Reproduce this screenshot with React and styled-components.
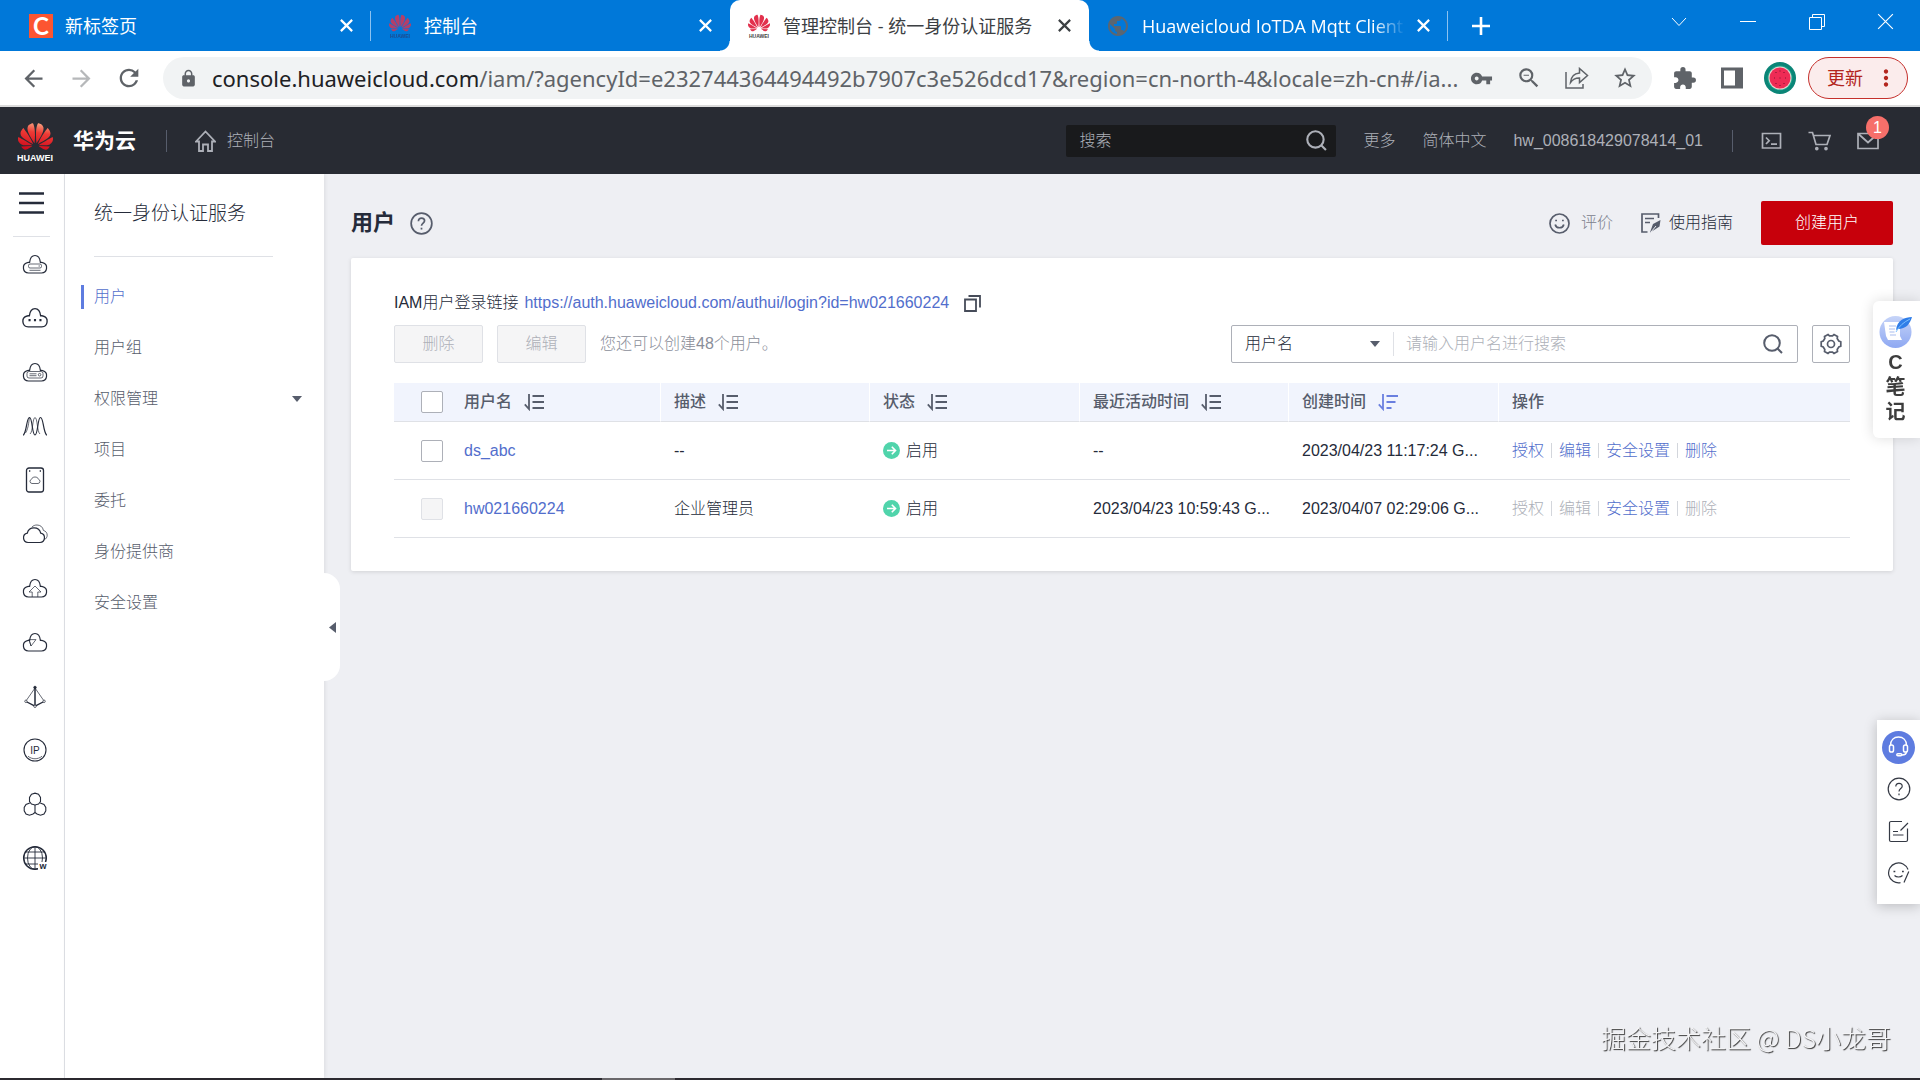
import styled, { createGlobalStyle, css } from "styled-components";
import {
  MdArrowBack,
  MdArrowForward,
  MdRefresh,
  MdLock,
  MdVpnKey,
  MdExtension,
  MdStarOutline,
  MdMoreVert,
  MdPublic,
  MdOutlineZoomOut,
} from "react-icons/md";
import { SiHuawei } from "react-icons/si";

const GlobalStyle = createGlobalStyle`
  * {
    box-sizing: border-box;
  }

  body {
    margin: 0;
    background: #eeeff3;
    color: #252b3a;
    font-family: "Liberation Sans", "Noto Sans CJK SC", sans-serif;
    font-size: 16px;
    font-weight: 300;
    line-height: 24px;
  }

  button,
  input,
  select {
    font: inherit;
    color: inherit;
    margin: 0;
    padding: 0;
    border: 0;
    background: none;
    outline: none;
  }

  a {
    color: inherit;
    text-decoration: none;
  }

  ul {
    list-style: none;
    margin: 0;
    padding: 0;
  }

  svg {
    display: block;
    flex: none;
  }
`;

const Page = styled.div`
  min-height: 100vh;
  display: flex;
  flex-direction: column;
`;

/* browser window */

const TabStrip = styled.div`
  height: 51px;
  display: flex;
  padding-left: 12px;
  background: #0078d9;
  color: #fff;
  font-family: "Open Sans", "Noto Sans CJK SC", sans-serif;
  font-size: 18px;
  font-weight: 400;
`;

const Tab = styled.div`
  position: relative;
  flex: 0 1 359px;
  min-width: 0;
  display: flex;
  align-items: center;
  gap: 12px;
  padding: 0 18px 0 17px;

  ${({ $divider }) =>
    $divider &&
    css`
      &::after {
        content: "";
        position: absolute;
        right: 0;
        top: 11px;
        width: 1px;
        height: 30px;
        background: #8cc2f0;
      }
    `}

  ${({ $active }) =>
    $active &&
    css`
      background: #fff;
      color: #3c4043;
      border-radius: 10px 10px 0 0;

      &::before,
      &::after {
        content: "";
        position: absolute;
        bottom: 0;
        width: 10px;
        height: 10px;
      }

      &::before {
        left: -10px;
        background: radial-gradient(circle at 0 0, transparent 9px, #fff 10px);
      }

      &::after {
        right: -10px;
        background: radial-gradient(circle at 100% 0, transparent 9px, #fff 10px);
      }
    `}
`;

const TabTitle = styled.span`
  flex: 1;
  min-width: 0;
  overflow: hidden;
  white-space: nowrap;
  ${({ $fade }) => $fade && "mask-image: linear-gradient(90deg, #000 88%, transparent);"}
`;

const CsdnMark = styled.span`
  flex: none;
  width: 24px;
  height: 24px;
  background: #fc5531;
  font-family: Lato, sans-serif;
  font-size: 24px;
  font-weight: 700;
  line-height: 24px;
  text-align: center;
`;

const FavMark = styled.span`
  flex: none;
  width: 24px;
  display: flex;
  flex-direction: column;
  align-items: center;
  color: #e2314d;
  opacity: ${({ $dim }) => ($dim ? 0.8 : 1)};
`;

const FavText = styled.span`
  color: ${({ $dim }) => ($dim ? "#233f7a" : "#444")};
  font-family: "Liberation Sans", sans-serif;
  font-size: 5px;
  font-weight: 700;
  line-height: 5px;
`;

const PlainButton = styled.button`
  flex: none;
  display: flex;
  align-items: center;
  justify-content: center;
`;

const NewTab = styled(PlainButton)`
  width: 66px;
`;

const WindowButtons = styled.div`
  display: flex;
  height: 43px;
  margin-left: auto;
`;

const WindowButton = styled(PlainButton)`
  width: 69px;
`;

const Toolbar = styled.div`
  height: 56px;
  display: flex;
  align-items: center;
  padding: 0 12px 0 9px;
  background: #fff;
  border-bottom: 2px solid #dcdcdc;
  color: #5f6368;
  font-family: "Open Sans", "Noto Sans CJK SC", sans-serif;
  font-weight: 400;
`;

const NavButton = styled(PlainButton)`
  width: 48px;
  height: 42px;
  opacity: ${({ disabled }) => (disabled ? 0.45 : 1)};
`;

const AddressBar = styled.div`
  flex: 1;
  min-width: 0;
  height: 42px;
  display: flex;
  align-items: center;
  margin: 0 8px 0 10px;
  padding: 0 3px 0 16px;
  border-radius: 21px;
  background: #f1f3f4;
`;

const UrlLabel = styled.label`
  flex: 1;
  min-width: 0;
  display: flex;
  margin: 0 -8px 0 14px;
  font-family: "Noto Sans", sans-serif;
  font-size: 22px;
  line-height: 30px;
`;

const UrlHost = styled.span`
  color: #202124;
`;

const UrlPath = styled.input`
  flex: 1;
  min-width: 0;
`;

const Avatar = styled.span`
  width: 32px;
  height: 32px;
  margin: 0 12px 0 8px;
`;

const UpdateButton = styled.button`
  flex: none;
  width: 100px;
  height: 42px;
  display: flex;
  align-items: center;
  justify-content: space-between;
  padding: 0 8px 0 18px;
  border: 1px solid #c5302c;
  border-radius: 21px;
  background: #fbecec;
  color: #b3261e;
  font-size: 18px;
`;

/* console header */

const ConsoleHeader = styled.header`
  height: 67px;
  display: flex;
  align-items: center;
  padding: 0 41px 0 16px;
  background: #282b33;
  color: #adb0b8;
`;

const Logo = styled.a`
  width: 38px;
  display: flex;
  flex-direction: column;
  align-items: center;
  color: #fff;
  font-size: 9px;
  font-weight: 700;
  line-height: 8px;
`;

const Petals = styled(SiHuawei)`
  path {
    fill: url(#petals);
  }
`;

const Brand = styled.a`
  margin-left: 19px;
  color: #fff;
  font-size: 21px;
  font-weight: 700;
`;

const HeaderRule = styled.span`
  width: 1px;
  height: 22px;
  margin: 0 28px 0 ${({ $left }) => $left}px;
  background: #575d6c;
`;

const HomeLink = styled.a`
  display: flex;
  align-items: center;
  gap: 11px;
`;

const HeaderSearch = styled.label`
  width: 270px;
  height: 32px;
  display: flex;
  align-items: center;
  margin-left: auto;
  padding: 0 9px 0 13px;
  border-radius: 2px;
  background: #191a1c;

  input {
    flex: 1;
    min-width: 0;
  }

  input::placeholder {
    color: #adb0b8;
    opacity: 1;
  }
`;

const HeaderLink = styled.a`
  margin-left: 27px;
`;

const HeaderIcons = styled.div`
  display: flex;
  gap: 26px;
`;

const MailButton = styled(PlainButton)`
  position: relative;
`;

const MailBadge = styled.span`
  position: absolute;
  left: 9px;
  top: -15px;
  width: 23px;
  height: 23px;
  border-radius: 50%;
  background: #f66f6a;
  color: #fff;
  line-height: 23px;
`;

/* body */

const Body = styled.div`
  flex: 1;
  display: flex;
`;

const Rail = styled.nav`
  flex: none;
  width: 65px;
  padding: 18px 14px 0 13px;
  border-right: 1px solid #dfe1e6;
  background: #fff;
  color: #252b3a;
`;

const MenuButton = styled(PlainButton)`
  width: 37px;
  padding-bottom: 22px;
  border-bottom: 1px solid #dfe1e6;
`;

const RailItem = styled.a`
  width: 44px;
  height: 54px;
  display: flex;
  align-items: center;
  justify-content: center;
`;

const SideNav = styled.aside`
  position: relative;
  flex: none;
  width: 259px;
  padding-left: 29px;
  background: #fff;
  box-shadow: 1px 0 4px rgba(0, 0, 0, 0.08);
`;

const SideTitle = styled.h2`
  margin: 0 51px 14px 0;
  padding: 28px 0 30px;
  border-bottom: 1px solid #dfe1e6;
  font-size: 19px;
  font-weight: 300;
`;

const SideItem = styled.li`
  height: 51px;
  display: flex;
  align-items: center;
  gap: 10px;
  padding-right: 22px;
  margin-left: -13px;
  color: ${({ $active }) => ($active ? "#526ecc" : "#575d6c")};

  &::before {
    content: "";
    width: 3px;
    height: 24px;
    background: ${({ $active }) => ($active ? "#5e7ce0" : "transparent")};
  }

  a {
    flex: 1;
  }
`;

const CollapseHandle = styled.button`
  position: absolute;
  left: 259px;
  top: 399px;
  width: 16px;
  height: 108px;
  display: flex;
  align-items: center;
  padding-left: 5px;
  border-radius: 0 16px 16px 0;
  background: #fff;
`;

const Main = styled.main`
  flex: 1;
  min-width: 0;
  padding: 0 27px;
`;

const TitleBar = styled.div`
  display: flex;
  align-items: center;
  padding: 27px 0 13px;
  color: #575d6c;
`;

const Title = styled.h1`
  margin: 0 15px 0 0;
  color: #252b3a;
  font-size: 22px;
  font-weight: 700;
`;

const TitleLink = styled.a`
  display: flex;
  align-items: center;
  gap: ${({ $gap }) => $gap}px;
  margin-left: ${({ $left }) => $left || "28px"};
  color: ${({ $dark }) => ($dark ? "#252b3a" : "#7b808c")};

  svg {
    color: #575d6c;
  }
`;

const CreateButton = styled.button`
  width: 132px;
  height: 44px;
  margin-left: 28px;
  border-radius: 2px;
  background: #c7000b;
  color: #fff;
`;

const Card = styled.section`
  padding: 33px 43px;
  border-radius: 2px;
  background: #fff;
  box-shadow: 0 1px 4px rgba(0, 0, 0, 0.12);
`;

const LoginLink = styled.div`
  display: flex;
  align-items: center;
  gap: 6px;

  button {
    margin-left: 9px;
    color: #464c59;
  }
`;

const TextLink = styled.a`
  color: ${({ $off }) => ($off ? "#adb0b8" : "#526ecc")};
`;

const ActionBar = styled.div`
  display: flex;
  align-items: center;
  gap: 14px;
  margin: 10px 0 20px;
`;

const GrayButton = styled.button`
  width: 89px;
  height: 38px;
  border: 1px solid #dfe1e6;
  border-radius: 2px;
  background: #f5f5f6;
  color: #adb0b8;
`;

const Quota = styled.span`
  color: #8a8e99;
`;

const FilterBox = styled.div`
  width: 567px;
  height: 38px;
  display: flex;
  align-items: center;
  margin-left: auto;
  padding-right: 14px;
  border: 1px solid #adb0b8;
  border-radius: 2px;
  color: #575d6c;
`;

const FieldLabel = styled.label`
  width: 162px;
  display: flex;
  align-items: center;
  padding: 0 13px;
  border-right: 1px solid #dfe1e6;

  select {
    flex: 1;
    appearance: none;
    color: #252b3a;
  }
`;

const FilterInput = styled.input`
  flex: 1;
  min-width: 0;
  padding-left: 12px;

  &::placeholder {
    color: #adb0b8;
    opacity: 1;
  }
`;

const GearButton = styled(PlainButton)`
  width: 38px;
  height: 38px;
  border: 1px solid #adb0b8;
  border-radius: 2px;
  color: #575d6c;
`;

const Table = styled.table`
  width: 100%;
  table-layout: fixed;
  border-collapse: separate;
  border-spacing: 0;

  th,
  td {
    padding: 0 14px;
    border-bottom: 1px solid #dfe1e6;
    text-align: left;
    overflow: hidden;
    white-space: nowrap;
  }

  th {
    height: 39px;
    background: #f1f4fd;
    color: #575d6c;
    font-weight: 500;
  }

  th + th + th {
    padding-left: 13px;
    border-left: 1px solid #fff;
  }

  td {
    height: 58px;
  }

  th:first-child,
  td:first-child {
    padding: 0 0 0 27px;
  }
`;

const Col = styled.col`
  width: ${({ $width }) => $width};
`;

const HeadCell = styled.div`
  display: flex;
  align-items: center;
  gap: 12px;
`;

const Checkbox = styled.input`
  display: block;
  appearance: none;
  width: 22px;
  height: 22px;
  border: 1px solid #adb0b8;
  border-radius: 2px;
  background: #fff;

  &:disabled {
    border-color: #dfe1e6;
    background: #f5f5f6;
  }
`;

const Status = styled.span`
  display: flex;
  align-items: center;
  gap: 6px;
`;

const RowActions = styled.div`
  display: flex;
  align-items: center;

  a + a {
    display: flex;
    align-items: center;
  }

  a + a::before {
    content: "";
    width: 1px;
    height: 15px;
    margin: 0 7px;
    background: #d3d6dc;
  }
`;

/* floating widgets */

const NotePanel = styled.button`
  position: fixed;
  right: 0;
  top: 301px;
  width: 47px;
  height: 137px;
  display: flex;
  flex-direction: column;
  align-items: center;
  padding: 14px 2px 0 0;
  border-radius: 6px 0 0 6px;
  background: #fff;
  box-shadow: 0 0 14px rgba(0, 0, 0, 0.14);
  color: #3d3d3d;
  font-size: 20px;
  font-weight: 700;
  line-height: 25px;

  svg {
    margin-bottom: 2px;
  }
`;

const ToolPanel = styled.div`
  position: fixed;
  right: 0;
  top: 720px;
  width: 43px;
  height: 184px;
  display: flex;
  flex-direction: column;
  align-items: center;
  padding-top: 6px;
  background: #fff;
  box-shadow: 0 2px 12px rgba(0, 0, 0, 0.22);
  color: #343944;

  button {
    height: 42px;
  }
`;

const Watermark = styled.span`
  position: fixed;
  right: 29px;
  bottom: 25px;
  color: #f4f4f6;
  font-family: "Noto Sans CJK SC", sans-serif;
  font-size: 25px;
  line-height: 36px;
  text-shadow: 1px 1px 1px #333;
`;

const TaskEdge = styled.footer`
  height: 2px;
  display: flex;
  padding-left: 602px;
  background: #2c2a30;
`;

const TaskEdgeActive = styled.span`
  width: 73px;
  background: #6a686b;
`;

/* icons */

const Stroke = ({ w = 24, h = 24, box, sw = 1.5, children }) => (
  <svg
    width={w}
    height={h}
    viewBox={box || `0 0 ${w} ${h}`}
    fill="none"
    stroke="currentColor"
    strokeWidth={sw}
    aria-hidden="true"
  >
    {children}
  </svg>
);

const Cross = ({ size = 12, sw = 2 }) => (
  <Stroke w={size} h={size} box="0 0 12 12" sw={sw}>
    <path d="M0.8 0.8l10.4 10.4M11.2 0.8L0.8 11.2" />
  </Stroke>
);

const Caret = () => (
  <svg width="10" height="6" viewBox="0 0 10 6" fill="#575d6c" aria-hidden="true">
    <path d="M0 0h10L5 6z" />
  </svg>
);

const Magnifier = ({ size = 20, sw = 2 }) => (
  <Stroke w={size} h={size} box="0 0 20 20" sw={sw}>
    <circle cx="9" cy="9" r="7.8" />
    <path d="M14.5 14.5l4.5 4.5" />
  </Stroke>
);

const SortIcon = ({ active }) => (
  <svg
    width="20"
    height="18"
    viewBox="0 0 20 18"
    fill="none"
    stroke={active ? "#6a7fdf" : "#575d6c"}
    strokeWidth="1.8"
    aria-hidden="true"
  >
    <path d="M5 1v15L0.8 11.4" />
    <path d={active ? "M8.5 3H20M8.5 9h9M8.5 15h5" : "M8.5 3H20M8.5 9H20M8.5 15H20"} />
  </svg>
);

const HelpCircle = ({ size = 24, sw = 1.8 }) => (
  <Stroke w={size} h={size} box="0 0 24 24" sw={sw}>
    <circle cx="12" cy="12" r="10.8" />
    <path d="M8.8 9.6c0-2 1.4-3.3 3.2-3.3s3.2 1.2 3.2 2.9c0 2.3-3.2 2.5-3.2 5.2" />
    <path d="M12 16.4v1.9" />
  </Stroke>
);

const cloudPath =
  "M6.5 19h13a5.3 5.3 0 0 0 1.2-10.4c-.9-.3-1.8-.3-2.3-.2C17.9 4 15.6 1.5 13 1.5S8.1 4 7.6 8.4c-.5-.1-1.4-.1-2.3.2A5.3 5.3 0 0 0 6.5 19z";

const Cloud = ({ children }) => (
  <Stroke w={26} h={21} sw={1.2}>
    <path d={cloudPath} />
    {children}
  </Stroke>
);

const railIcons = [
  {
    label: "弹性云服务器",
    icon: (
      <Cloud>
        <rect x="6.5" y="10" width="13" height="4" rx="1.5" strokeWidth="0.7" />
        <path d="M16.5 12H18M7.5 16.3h11" strokeWidth="0.7" />
      </Cloud>
    ),
  },
  {
    label: "云容器引擎",
    icon: (
      <Stroke w={28} h={22} box="0 0 26 21" sw={1.3}>
        <path d={cloudPath} />
        <path d="M6.8 12.5h2M12 12.5h2M17.2 12.5h2" strokeWidth="2" />
      </Stroke>
    ),
  },
  {
    label: "裸金属服务器",
    icon: (
      <Cloud>
        <rect x="5" y="9.5" width="16" height="6.5" rx="2" strokeWidth="0.7" />
        <path d="M7.5 11.8h7M7.5 13.7h7" strokeWidth="0.7" />
        <circle cx="17.6" cy="12.7" r="1.3" strokeWidth="0.7" />
      </Cloud>
    ),
  },
  {
    label: "弹性伸缩",
    icon: (
      <Stroke w={26} h={20} sw={1.2}>
        <path d="M1 19h.5C5 15 4.500 1.500 7.500 1.500S10 19 13 19 15.500 1.500 18.500 1.500 21 15 24.500 19h.5" />
        <path d="M3.500 17C7 12 7 1.500 7.500 1.500M8 18c3-2 2.500-16.500 5-16.500S15 16 18 18" strokeWidth="0.7" />
      </Stroke>
    ),
  },
  {
    label: "云硬盘",
    icon: (
      <Stroke w={20} h={26} sw={1.3}>
        <rect x="1.5" y="1" width="17" height="24" rx="2.5" />
        <path d="M4 4h1.3M14.7 4H16" />
        <path
          d="M7 16.5h6a2.2 2.2 0 0 0 .4-4.3C13 10.8 11.7 10 10 10s-3 .8-3.4 2.2A2.2 2.2 0 0 0 7 16.5z"
          strokeWidth="0.7"
        />
      </Stroke>
    ),
  },
  {
    label: "云备份",
    icon: (
      <Stroke w={26} h={20} sw={1.2}>
        <path d="M6 18.5h12a4.7 4.7 0 0 0 .7-9.3C18 5.7 15.5 3.8 12 3.8S6 5.7 5.3 9.2A4.7 4.7 0 0 0 6 18.5z" />
        <path
          d="M10 3c1.4-1.4 3-2 5-2 3.4 0 5.8 2 6.4 5.4 2.4.7 3.8 2.5 3.8 4.8 0 2-1.2 3.7-2.8 4.5"
          strokeWidth="0.7"
        />
      </Stroke>
    ),
  },
  {
    label: "对象存储服务",
    icon: (
      <Cloud>
        <path d="M10.2 19v-5H7l6-6 6 6h-3.2v5" strokeWidth="0.7" />
      </Cloud>
    ),
  },
  {
    label: "内容分发网络",
    icon: (
      <Cloud>
        <path d="M7 7.6h7L9 14zM7 7.6l2 6.4" strokeWidth="0.7" />
      </Cloud>
    ),
  },
  {
    label: "虚拟私有云",
    icon: (
      <Stroke w={22} h={23} sw={0.7}>
        <circle cx="11" cy="2.5" r="1.3" fill="currentColor" />
        <path d="M11 3L1.800 16.200M11 3l9.200 13.200" />
        <path d="M11 3v18" strokeWidth="1.5" />
        <path d="M2 16.500l9 4.700 9-4.700" strokeWidth="1.3" />
        <circle cx="1.9" cy="16.3" r="1.2" fill="#fff" />
        <circle cx="20.1" cy="16.3" r="1.2" fill="#fff" />
        <circle cx="11" cy="21.3" r="1.2" fill="#fff" />
      </Stroke>
    ),
  },
  {
    label: "弹性公网IP",
    icon: (
      <Stroke w={24} h={24} sw={1.1}>
        <circle cx="12" cy="12" r="11" />
        <path d="M5 18.2c4 3.4 10 3.4 14 0" strokeWidth="0.7" />
        <text
          x="12"
          y="15.5"
          fontSize="10"
          textAnchor="middle"
          fill="currentColor"
          stroke="none"
        >
          IP
        </text>
      </Stroke>
    ),
  },
  {
    label: "区块链",
    icon: (
      <Stroke w={24} h={24} sw={1.1}>
        <path d="M8.500 2.300L12 1.200l3.500 1.100 2 3.200v4L15.500 12 12 13l-3.500-1-2-2.500v-4z" />
        <path d="M6.800 11L3 12.500l-1.800 3v3.300L3 22l3.500 1.200L10 22l2-1.500 2 1.500 3.500 1.200L21 22l1.800-3.200v-3.300l-1.800-3-3.800-1.500" />
        <path d="M12 13v7.500" />
      </Stroke>
    ),
  },
  {
    label: "域名注册",
    icon: (
      <Stroke w={26} h={26} sw={0.9}>
        <circle cx="13" cy="13" r="11.3" strokeWidth="1.5" />
        <ellipse cx="13" cy="13" rx="7.5" ry="11.3" />
        <path d="M13 1.700v22.600M1.700 13h22.600M4 7h18M4 19h18" />
        <path d="M16 17h10v8H16z" fill="#fff" stroke="none" />
        <text x="21" y="24" fontSize="9" fontWeight="700" textAnchor="middle" fill="currentColor" stroke="none">
          w
        </text>
      </Stroke>
    ),
  },
];

const HuaweiFavicon = ({ dim }) => (
  <FavMark $dim={dim}>
    <SiHuawei size={22} />
    <FavText $dim={dim}>HUAWEI</FavText>
  </FavMark>
);

const tabs = [
  { title: "新标签页", icon: <CsdnMark>C</CsdnMark>, divider: true },
  { title: "控制台", icon: <HuaweiFavicon dim /> },
  { title: "管理控制台 - 统一身份认证服务", icon: <HuaweiFavicon />, active: true },
  {
    title: "Huaweicloud IoTDA Mqtt Client",
    icon: <MdPublic size={24} color="#5a6672" />,
    divider: true,
    fade: true,
  },
];

const sideItems = ["用户", "用户组", "权限管理", "项目", "委托", "身份提供商", "安全设置"];

const columns = [
  { title: "用户名", sort: true },
  { title: "描述", sort: true },
  { title: "状态", sort: true },
  { title: "最近活动时间", sort: true },
  { title: "创建时间", sort: true, active: true },
  { title: "操作" },
];

const users = [
  {
    name: "ds_abc",
    desc: "--",
    lastActive: "--",
    created: "2023/04/23 11:17:24 G...",
    locked: false,
  },
  {
    name: "hw021660224",
    desc: "企业管理员",
    lastActive: "2023/04/23 10:59:43 G...",
    created: "2023/04/07 02:29:06 G...",
    locked: true,
  },
];

const BrowserChrome = () => (
  <>
    <TabStrip>
      {tabs.map((tab) => (
        <Tab key={tab.title} $active={tab.active} $divider={tab.divider}>
          {tab.icon}
          <TabTitle $fade={tab.fade}>{tab.title}</TabTitle>
          <PlainButton aria-label="关闭标签页">
            <Cross size={13} />
          </PlainButton>
        </Tab>
      ))}
      <NewTab aria-label="新建标签页">
        <Stroke w={18} h={18} sw={2.6}>
          <path d="M9 0v18M0 9h18" />
        </Stroke>
      </NewTab>
      <WindowButtons>
        <WindowButton aria-label="搜索标签页">
          <Stroke w={16} h={10} sw={1}>
            <path d="M1 1l7 7.500L15 1" />
          </Stroke>
        </WindowButton>
        <WindowButton aria-label="最小化">
          <Stroke w={16} h={2} sw={1}>
            <path d="M0 0.500h16" />
          </Stroke>
        </WindowButton>
        <WindowButton aria-label="还原">
          <Stroke w={16} h={16} sw={1}>
            <path d="M0.500 3.500h12v12H0.500zM3.500 3.500v-3h12v12h-3" />
          </Stroke>
        </WindowButton>
        <WindowButton aria-label="关闭">
          <Cross size={17} sw={0.8} />
        </WindowButton>
      </WindowButtons>
    </TabStrip>
    <Toolbar>
      <NavButton aria-label="后退">
        <MdArrowBack size={27} />
      </NavButton>
      <NavButton aria-label="前进" disabled>
        <MdArrowForward size={27} />
      </NavButton>
      <NavButton aria-label="重新加载">
        <MdRefresh size={28} />
      </NavButton>
      <AddressBar>
        <MdLock size={19} />
        <UrlLabel>
          <UrlHost>console.huaweicloud.com</UrlHost>
          <UrlPath
            aria-label="网址"
            defaultValue="/iam/?agencyId=e232744364494492b7907c3e526dcd17&region=cn-north-4&locale=zh-cn#/ia..."
          />
        </UrlLabel>
        <NavButton aria-label="密码">
          <MdVpnKey size={23} />
        </NavButton>
        <NavButton aria-label="缩放">
          <MdOutlineZoomOut size={26} />
        </NavButton>
        <NavButton aria-label="分享">
          <Stroke w={24} h={22} sw={1.5}>
            <path d="M1 5v16h17v-4" />
            <path d="M5.500 15.500C6 9.500 9 6.500 14.500 6V1.500l8 7-8 7V11c-4-.2-6.500 1-9 4.500z" />
          </Stroke>
        </NavButton>
        <NavButton aria-label="收藏">
          <MdStarOutline size={26} />
        </NavButton>
      </AddressBar>
      <NavButton aria-label="扩展程序">
        <MdExtension size={25} />
      </NavButton>
      <NavButton aria-label="侧边栏">
        <svg width="22" height="22" viewBox="0 0 22 22" fill="currentColor" aria-hidden="true">
          <path fillRule="evenodd" d="M0 0.500h22v21H0zM3 3.500v15h11v-15z" />
        </svg>
      </NavButton>
      <Avatar>
        <svg width="32" height="32" viewBox="0 0 32 32" aria-hidden="true">
          <circle cx="16" cy="16" r="16" fill="#0b8577" />
          <circle cx="16" cy="16" r="12.5" fill="#19a58c" />
          <circle cx="16" cy="16" r="11.5" fill="#e9d3cf" />
          <circle cx="16" cy="16" r="10.5" fill="#ee2b55" />
          <path
            d="M12 10v1M16 8.500v1M20 10v1M10 16h1M16 15.500v1M21 16h1M12 21v1M16 23v1M20 21v1"
            stroke="#8c1533"
            strokeWidth="1.2"
          />
        </svg>
      </Avatar>
      <UpdateButton>
        更新
        <MdMoreVert size={26} />
      </UpdateButton>
    </Toolbar>
  </>
);

const TopHeader = () => (
  <ConsoleHeader>
    <svg width="0" height="0" aria-hidden="true">
      <linearGradient id="petals" x1="0.6" y1="0" x2="0.4" y2="1">
        <stop offset="0" stopColor="#f7a07e" />
        <stop offset="0.35" stopColor="#ee3a35" />
        <stop offset="1" stopColor="#cf0a1c" />
      </linearGradient>
    </svg>
    <Logo href="#">
      <Petals size={35} />
      HUAWEI
    </Logo>
    <Brand href="#">华为云</Brand>
    <HeaderRule $left={30} />
    <HomeLink href="#">
      <Stroke w={21} h={22} sw={1.8}>
        <path d="M1 11.500L10.500 1.500 20 11.500h-3V21h-4v-6.500H8V21H4v-9.500z" />
      </Stroke>
      控制台
    </HomeLink>
    <HeaderSearch>
      <input aria-label="搜索" placeholder="搜索" />
      <Magnifier size={21} />
    </HeaderSearch>
    <HeaderLink href="#">更多</HeaderLink>
    <HeaderLink href="#">简体中文</HeaderLink>
    <HeaderLink href="#">hw_008618429078414_01</HeaderLink>
    <HeaderRule $left={29} />
    <HeaderIcons>
      <PlainButton aria-label="命令行">
        <Stroke w={21} h={18} sw={1.7}>
          <path d="M1.500 1.500h18v14.500h-18zM5 5.500l3.200 3.200L5 12M10 12.200h6" />
        </Stroke>
      </PlainButton>
      <PlainButton aria-label="购物车">
        <Stroke w={23} h={20} sw={1.7}>
          <path d="M0.500 1.500h4L8 13.500h11L22 4.500H5.400" />
          <circle cx="8.8" cy="17.6" r="1" fill="currentColor" />
          <circle cx="18" cy="17.6" r="1" fill="currentColor" />
        </Stroke>
      </PlainButton>
      <MailButton aria-label="消息">
        <Stroke w={22} h={18} sw={1.7}>
          <path d="M1 1.500h20v15H1zM1.500 2l9.500 8.500L20.500 2" />
        </Stroke>
        <MailBadge>1</MailBadge>
      </MailButton>
    </HeaderIcons>
  </ConsoleHeader>
);

const SideMenu = () => (
  <SideNav>
    <SideTitle>统一身份认证服务</SideTitle>
    <ul>
      {sideItems.map((item) => (
        <SideItem key={item} $active={item === "用户"}>
          <a href="#">{item}</a>
          {item === "权限管理" && <Caret />}
        </SideItem>
      ))}
    </ul>
    <CollapseHandle aria-label="收起菜单">
      <svg width="7" height="11" viewBox="0 0 7 11" fill="#575d6c" aria-hidden="true">
        <path d="M7 0v11L0 5.500z" />
      </svg>
    </CollapseHandle>
  </SideNav>
);

const UserRow = ({ user }) => (
  <tr>
    <td>
      <Checkbox type="checkbox" aria-label={user.name} disabled={user.locked} />
    </td>
    <td>
      <TextLink href="#">{user.name}</TextLink>
    </td>
    <td>{user.desc}</td>
    <td>
      <Status>
        <svg width="17" height="17" viewBox="0 0 17 17" aria-hidden="true">
          <circle cx="8.5" cy="8.5" r="8.5" fill="#50d4ab" />
          <path d="M4 8.500h8.500M8.800 4.800l3.700 3.700-3.700 3.700" fill="none" stroke="#fff" strokeWidth="1.6" />
        </svg>
        启用
      </Status>
    </td>
    <td>{user.lastActive}</td>
    <td>{user.created}</td>
    <td>
      <RowActions>
        <TextLink href="#" $off={user.locked}>授权</TextLink>
        <TextLink href="#" $off={user.locked}>编辑</TextLink>
        <TextLink href="#">安全设置</TextLink>
        <TextLink href="#" $off={user.locked}>删除</TextLink>
      </RowActions>
    </td>
  </tr>
);

const UserTable = () => (
  <Table>
    <colgroup>
      <Col $width="56px" />
      <Col $width="210px" />
      <Col $width="209px" />
      <Col $width="210px" />
      <Col $width="209px" />
      <Col $width="210px" />
      <Col $width="auto" />
    </colgroup>
    <thead>
      <tr>
        <th>
          <Checkbox type="checkbox" aria-label="全选" />
        </th>
        {columns.map((column) => (
          <th key={column.title}>
            <HeadCell>
              {column.title}
              {column.sort && <SortIcon active={column.active} />}
            </HeadCell>
          </th>
        ))}
      </tr>
    </thead>
    <tbody>
      {users.map((user) => (
        <UserRow key={user.name} user={user} />
      ))}
    </tbody>
  </Table>
);

const FloatingTools = () => (
  <ToolPanel>
    <PlainButton aria-label="在线客服">
      <svg width="33" height="33" viewBox="0 0 33 33" fill="none" stroke="#fff" strokeWidth="1.5" aria-hidden="true">
        <circle cx="16.5" cy="16.5" r="16.5" fill="#5e7ce0" stroke="none" />
        <path d="M8.500 14.500C8.500 9 12 6 16.500 6s8 3 8 8.500M24.500 20.500c0 2.300-2 3.500-4.500 3.500" />
        <rect x="7.5" y="14" width="4" height="7" rx="1.8" />
        <rect x="21.5" y="14" width="4" height="7" rx="1.8" />
        <rect x="14.8" y="22.8" width="5" height="2" rx="1" />
      </svg>
    </PlainButton>
    <PlainButton aria-label="帮助">
      <HelpCircle size={24} sw={1.2} />
    </PlainButton>
    <PlainButton aria-label="建议">
      <Stroke w={21} h={23} sw={1.2}>
        <path d="M14 1.500H3A1.500 1.500 0 0 0 1.500 3v17A1.500 1.500 0 0 0 3 21.500h15a1.500 1.500 0 0 0 1.500-1.500V8.500M20 3l-7.500 7.500M5 11.500h5M5 15h10.500" />
      </Stroke>
    </PlainButton>
    <PlainButton aria-label="评价">
      <Stroke w={23} h={22} sw={1.2}>
        <path d="M21 7.500A10 10 0 1 0 13.500 20.700M21.800 9.500L17 20.500" />
        <path d="M6.500 9.500h1.800M15 9.500h1.800" strokeWidth="1.7" />
        <path d="M7.500 13.500c2 2 6 2 8 0" />
      </Stroke>
    </PlainButton>
  </ToolPanel>
);

const App = () => {
  return (
    <Page>
      <GlobalStyle />
      <BrowserChrome />
      <TopHeader />
      <Body>
        <Rail>
          <MenuButton aria-label="服务列表">
            <Stroke w={25} h={22} sw={2.4}>
              <path d="M0 1.500h25M0 11h25M0 20.500h25" />
            </Stroke>
          </MenuButton>
          {railIcons.map((item) => (
            <RailItem key={item.label} href="#" aria-label={item.label}>
              {item.icon}
            </RailItem>
          ))}
        </Rail>
        <SideMenu />
        <Main>
          <TitleBar>
            <Title>用户</Title>
            <HelpCircle size={23} />
            <TitleLink href="#" $gap={11} $left="auto">
              <Stroke w={21} h={21} sw={1.7}>
                <circle cx="10.5" cy="10.5" r="9.5" />
                <path d="M6.200 11.500c1 4.300 7.600 4.300 8.600 0M6.200 7.500H8M13 7.500h1.800" />
              </Stroke>
              评价
            </TitleLink>
            <TitleLink href="#" $gap={8} $dark>
              <Stroke w={20} h={20} sw={1.7}>
                <path d="M17.500 5V1H1v18h5.500M4 5.500h9M4 9.500h5" />
                <path d="M19.500 7l-1 6.500-7 4.500L9 19.500l1-3 2-5.500z" fill="currentColor" stroke="none" />
                <path d="M10 19l5-6" stroke="#eeeff3" strokeWidth="1" />
              </Stroke>
              使用指南
            </TitleLink>
            <CreateButton>创建用户</CreateButton>
          </TitleBar>
          <Card>
            <LoginLink>
              <span>IAM用户登录链接</span>
              <TextLink href="#">https://auth.huaweicloud.com/authui/login?id=hw021660224</TextLink>
              <PlainButton aria-label="复制">
                <Stroke w={17} h={17} sw={1.8}>
                  <path d="M1 4.500h11v11.500H1zM4.500 1H16v11.500" />
                </Stroke>
              </PlainButton>
            </LoginLink>
            <ActionBar>
              <GrayButton disabled>删除</GrayButton>
              <GrayButton disabled>编辑</GrayButton>
              <Quota>您还可以创建48个用户。</Quota>
              <FilterBox>
                <FieldLabel>
                  <select aria-label="搜索字段" defaultValue="用户名">
                    <option>用户名</option>
                  </select>
                  <Caret />
                </FieldLabel>
                <FilterInput aria-label="用户名搜索" placeholder="请输入用户名进行搜索" />
                <Magnifier />
              </FilterBox>
              <GearButton aria-label="列设置">
                <Stroke w={22} h={22} sw={1.7}>
                  <path d="M8 1.500l1.500 1.300h3L14 1.500l3.500 2-.3 2L18.800 8l2 .8v4.400l-2 .8-1.600 2.500.3 2-3.500 2-1.500-1.300h-3L8 20.500l-3.500-2 .3-2L3.200 14l-2-.8V8.800l2-.8 1.600-2.500-.3-2z" />
                  <circle cx="11" cy="11" r="3.5" />
                </Stroke>
              </GearButton>
            </ActionBar>
            <UserTable />
          </Card>
        </Main>
      </Body>
      <NotePanel>
        <svg width="33" height="33" viewBox="0 0 33 33" aria-hidden="true">
          <linearGradient id="note" x1="0" y1="0" x2="0" y2="1">
            <stop offset="0" stopColor="#c6d4f8" />
            <stop offset="1" stopColor="#8ea8f2" />
          </linearGradient>
          <circle cx="16.5" cy="17" r="16" fill="url(#note)" />
          <path d="M5 7h16v14l2 4H9L7 21z" fill="#fff" />
          <path d="M10 11h7M10 14h6M10.500 17h5M11 20h6" stroke="#a9bdf0" strokeWidth="1.2" />
          <path d="M33 2c-7 0-15 3-16 13l2-1c8 0 12-5 14-12z" fill="#2f7de8" />
          <path d="M31 4c-6 3-11 7-14 13" stroke="#7cc0ff" fill="none" />
        </svg>
        <span>C</span>
        <span>笔</span>
        <span>记</span>
      </NotePanel>
      <FloatingTools />
      <Watermark>掘金技术社区 @ DS小龙哥</Watermark>
      <TaskEdge>
        <TaskEdgeActive />
      </TaskEdge>
    </Page>
  );
};

export default App;
